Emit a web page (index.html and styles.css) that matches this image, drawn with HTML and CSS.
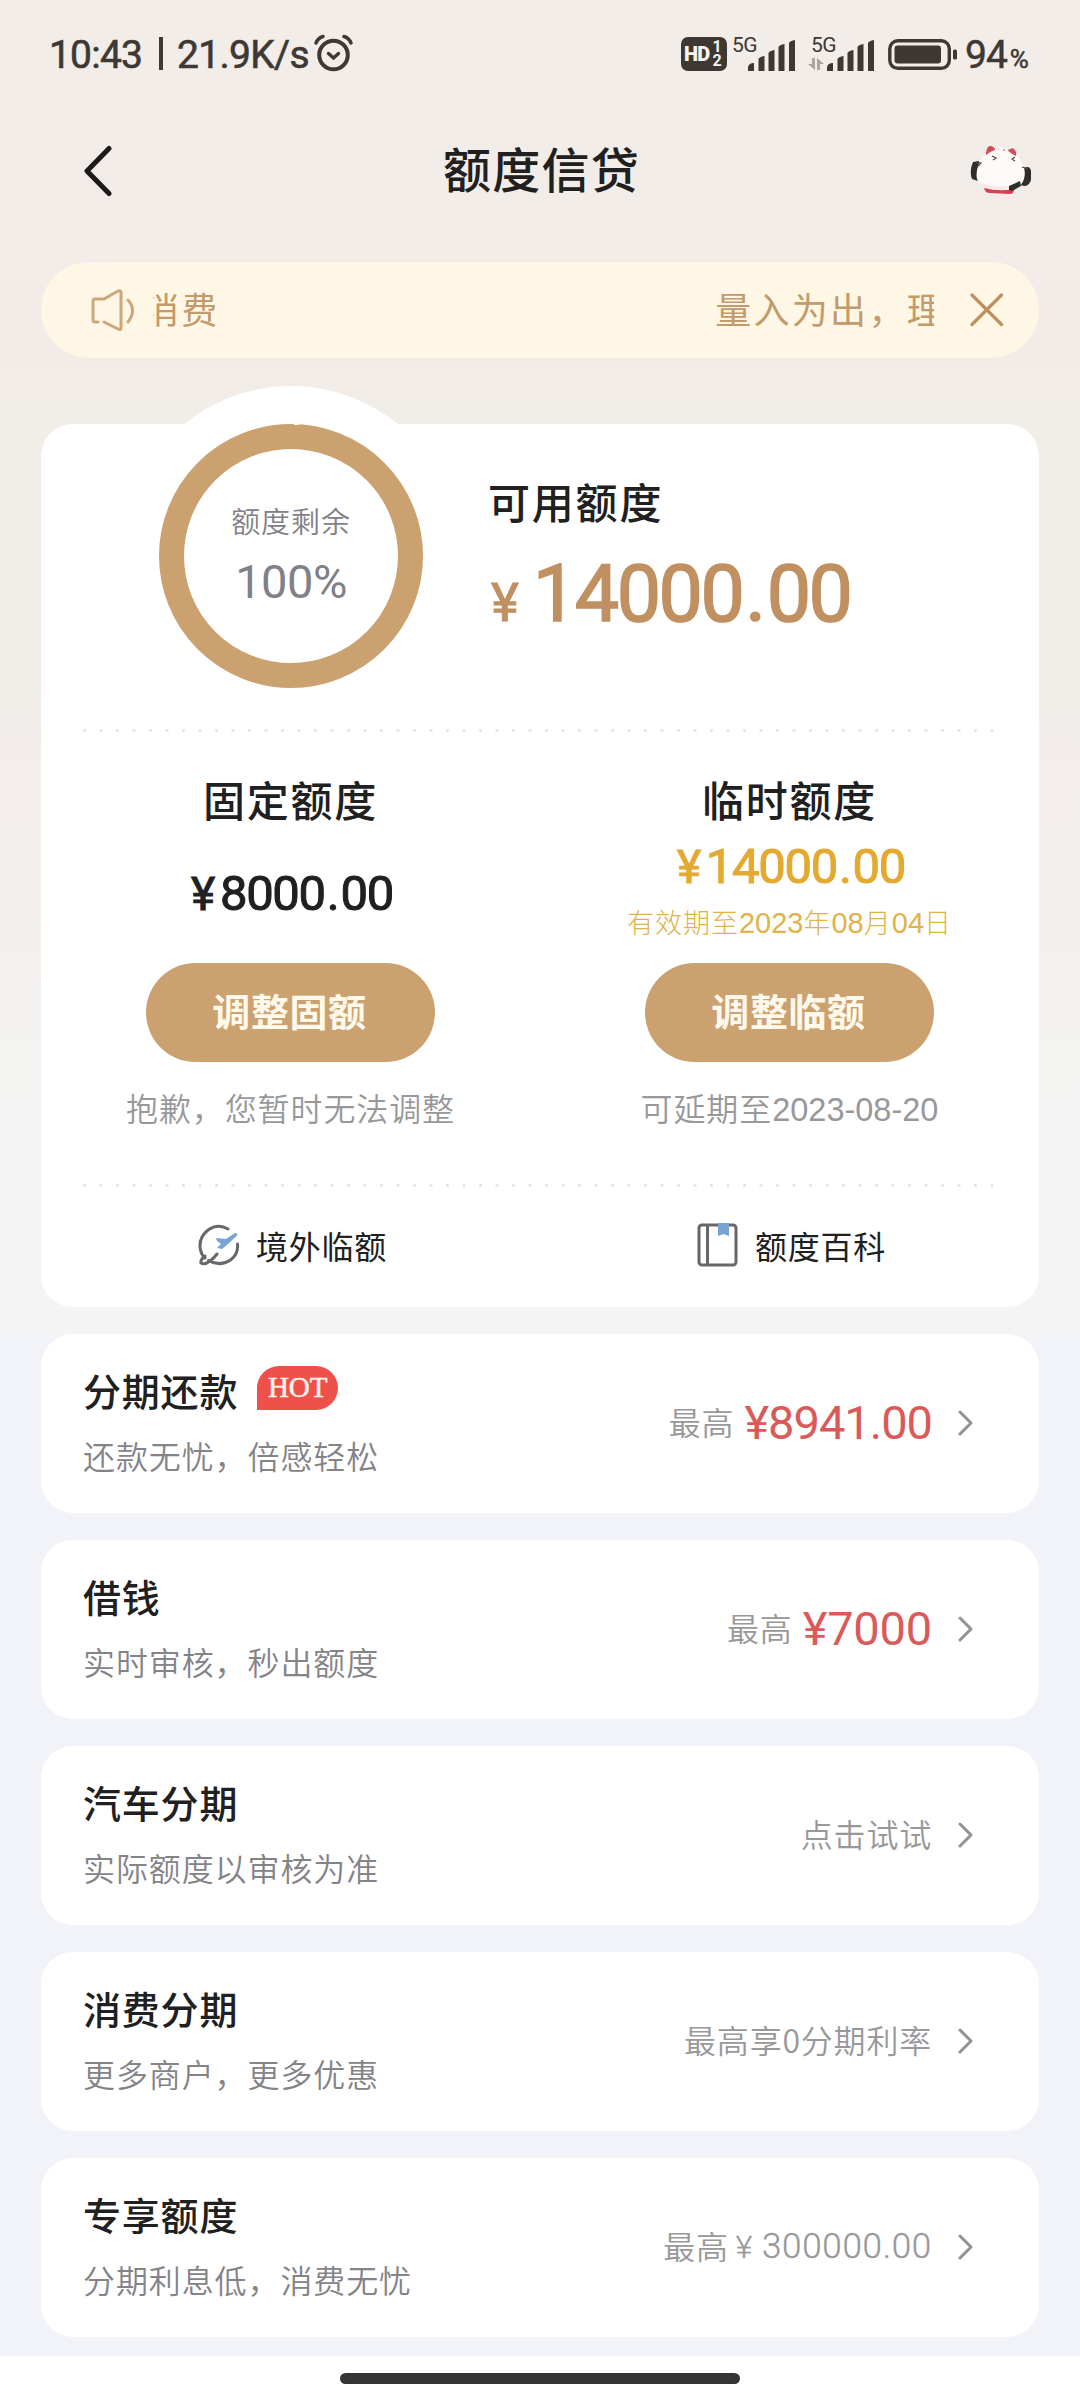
FILE: index.html
```html
<!DOCTYPE html>
<html lang="zh-CN">
<head>
<meta charset="utf-8">
<title>额度信贷</title>
<link rel="stylesheet" href="styles.css">
</head>
<body>
<svg class="defs" width="0" height="0" aria-hidden="true">
  <symbol id="chevron" viewBox="0 0 16 26"><path d="M2 2l11 11L2 24" fill="none" stroke="#929296" stroke-width="3" stroke-linecap="round" stroke-linejoin="round"/></symbol>
  <symbol id="signal" viewBox="0 0 48 32"><path d="M0 31v-4q1-4 6-4v8zM10.500 31V19q1-2 6-3v15zM20.500 31V13q1-2 6-3v21zM30.500 31V7q1-2 6-3v27zM41 31V3q1-2 6-3v31z" fill="#3d3834"/></symbol>
</svg>
<div class="screen">
  <header class="status">
    <span class="clock">10:43</span><span class="bar"></span><span class="speed">21.9K/s</span>
    <svg class="alarm" width="40" height="38" viewBox="0 0 40 38" fill="none" stroke="#3d3834" stroke-linecap="round"><circle cx="19.5" cy="21" r="14.3" stroke-width="4"/><path d="M14.5 19.5l5 4.5 5-4.5" stroke-width="3.4"/><path d="M2 9Q4 4 9 2.500M37 9Q35 4 30 2.500" stroke-width="3.4"/></svg>
    <div class="status-right">
      <span class="hd"><b>HD</b><i><em>1</em><em>2</em></i></span>
      <span class="net"><small>5G</small><svg width="48" height="32"><use href="#signal"/></svg></span>
      <span class="net net-b"><small>5G</small><svg class="updown" width="16" height="12" viewBox="0 0 16 12" fill="#aaa5a0"><path d="M4 0h3v12L0 6h4zM9 12V0l7 6h-4v6z"/></svg><svg width="48" height="32"><use href="#signal"/></svg></span>
      <svg class="battery" width="70" height="32" viewBox="0 0 70 32"><rect x="1.800" y="1.800" width="59.500" height="27.500" rx="8" fill="none" stroke="#3d3834" stroke-width="3.400"/><rect x="6.500" y="6.500" width="46.500" height="18" rx="3" fill="#3d3834"/><rect x="65" y="10.500" width="4" height="10" rx="1.500" fill="#3d3834"/></svg>
      <span class="level">94<small>%</small></span>
    </div>
  </header>

  <nav class="nav">
    <svg class="back" width="30" height="52" viewBox="0 0 30 52"><path d="M26 3.500L4 26l22 22.500" fill="none" stroke="#1d1a19" stroke-width="5" stroke-linecap="round" stroke-linejoin="round"/></svg>
    <h1>额度信贷</h1>
    <svg class="mascot" width="62" height="50" viewBox="0 0 62 50">
      <path d="M3 17l6-1-1 20-6-2q-3-8 1-17z" fill="#302d2d"/>
      <path d="M54 23q6-3 7 3v9q-2 6-7 6l-4-1z" fill="#302d2d"/>
      <path d="M29 2q14 1 20 11 8 10 5 21-4 13-25 12Q11 46 7 34q-2-10 5-21Q17 2 29 2z" fill="#fffafa"/>
      <path d="M9 36q3 8 12 9h18q10-2 14-10-8 7-22 6-14 1-22-5z" fill="#f8e9e6"/>
      <path d="M16 8q1-8 5-7 4 1 4 4-4 1-9 5zM38 6q3-4 6-2 3 3 2 7-4-2-8-5z" fill="#d64b5b"/>
      <path d="M14 43q15 4 30 1 0 5-4 5l-20-1q-5 0-6-5z" fill="#d83f52"/>
      <path d="M39 41l11-5 1 5-9 5-3-1z" fill="#302d2d"/>
      <path d="M22 11l4 2-3 2M45 12l-3 2 3 2M6 17l5 1-4 4M52 22l6 2" fill="none" stroke="#4b4544" stroke-width="1.200"/>
      <path d="M28 4h1M33 5h2M38 5h1" stroke="#dc8a93" stroke-width="1.500"/>
    </svg>
  </nav>

  <section class="notice">
    <svg width="46" height="44" viewBox="0 0 46 44" fill="none" stroke="#cda779" stroke-width="3" stroke-linecap="round" stroke-linejoin="round"><path d="M8 34H5q-2 0-2-2V13q0-2 2-2h9L28 3q3-1 3 1.500v35q0 3-3 1.500L14 34"/><path d="M38 12q9 10 0 22"/></svg>
    <div class="ticker"><span class="ticker-tail">消费</span><span class="ticker-head">量入为出，理</span></div>
    <svg class="close" width="34" height="34" viewBox="0 0 34 34"><path d="M2 2l29.500 29.500M31.500 2L2 31.500" stroke="#bd915f" stroke-width="3.200" stroke-linecap="round"/></svg>
  </section>

  <main>
    <section class="quota">
      <div class="overview">
        <div class="ring"><span class="ring-label">额度剩余</span><span class="ring-value">100%</span></div>
        <div class="available">
          <h2>可用额度</h2>
          <p class="total"><span class="yen">¥</span>14000<span class="dot">.</span>00</p>
        </div>
      </div>
      <div class="dots"></div>
      <div class="limits">
        <div class="limit">
          <h2>固定额度</h2>
          <div class="figures"><p class="sum"><span class="yen">¥</span>8000<span class="dot">.</span>00</p></div>
          <button>调整固额</button>
          <p class="note">抱歉，您暂时无法调整</p>
        </div>
        <div class="limit temp">
          <h2>临时额度</h2>
          <div class="figures"><p class="sum"><span class="yen">¥</span>14000<span class="dot">.</span>00</p><p class="valid">有效期至<span>2023</span>年<span>08</span>月<span>04</span>日</p></div>
          <button>调整临额</button>
          <p class="note">可延期至<span>2023-08-20</span></p>
        </div>
      </div>
      <div class="dots"></div>
      <div class="links">
        <a><svg width="42" height="42" viewBox="0 0 42 42"><path d="M30 5Q20-1 10 6 0 14 2.500 26q1 5 4.500 8M39.500 20q1 10-7 16-11 7-22 .5M7 32q-5 4-4 7 4 2 9-2 4-3 7-7" fill="none" stroke="#68686a" stroke-width="3" stroke-linecap="round"/><path d="M18 14l10 1 9-6q3 0 2 2.500L30 20l-6 5-5-1 4-4-4-3z" fill="#77a5d3"/></svg>境外临额</a>
        <a><svg width="42" height="44" viewBox="0 0 42 44"><rect x="2" y="2" width="37" height="40" rx="3" fill="none" stroke="#6a6665" stroke-width="3"/><path d="M10.500 2v40" stroke="#6a6665" stroke-width="3"/><path d="M21 0h11v13l-5.500-2L21 13z" fill="#7ba3d2"/></svg>额度百科</a>
      </div>
    </section>

    <section class="item">
      <div class="item-text"><h3>分期还款<span class="hot">HOT</span></h3><p>还款无忧，倍感轻松</p></div>
      <div class="item-value"><span>最高</span><strong>¥8941.00</strong></div>
      <svg width="16" height="26"><use href="#chevron"/></svg>
    </section>
    <section class="item">
      <div class="item-text"><h3>借钱</h3><p>实时审核，秒出额度</p></div>
      <div class="item-value"><span>最高</span><strong class="wide">¥7000</strong></div>
      <svg width="16" height="26"><use href="#chevron"/></svg>
    </section>
    <section class="item">
      <div class="item-text"><h3>汽车分期</h3><p>实际额度以审核为准</p></div>
      <div class="item-value"><span>点击试试</span></div>
      <svg width="16" height="26"><use href="#chevron"/></svg>
    </section>
    <section class="item">
      <div class="item-text"><h3>消费分期</h3><p>更多商户，更多优惠</p></div>
      <div class="item-value"><span>最高享0分期利率</span></div>
      <svg width="16" height="26"><use href="#chevron"/></svg>
    </section>
    <section class="item">
      <div class="item-text"><h3>专享额度</h3><p>分期利息低，消费无忧</p></div>
      <div class="item-value"><span>最高</span><span class="cap"><i>¥</i>300000.00</span></div>
      <svg width="16" height="26"><use href="#chevron"/></svg>
    </section>
  </main>
  <footer class="home"><span></span></footer>
</div>
</body>
</html>
```
FILE: styles.css
```css
* { box-sizing: border-box; margin: 0; padding: 0; }
body { width: 1080px; font-family: "Noto Sans CJK SC", sans-serif; color: #202020; }
svg { display: block; flex: none; }
i, em { font-style: normal; }
.defs { position: absolute; }
.screen {
  width: 1080px; height: 2400px; overflow: hidden;
  display: flex; flex-direction: column;
  background: linear-gradient(#f2ede8 0, #f2ece8 350px, #f1ede7 440px, #f1ede8 680px, #f3eeec 760px, #f3efed 930px, #f3f3f2 1060px, #f4f4f4 1334px, #f2f3f8 1336px);
}

/* status bar */
.status { height: 112px; padding: 0 51px 0 49px; display: flex; align-items: flex-start; font-family: Roboto, sans-serif; color: #3d3834; white-space: nowrap; }
.clock, .speed { font-size: 39px; line-height: 46px; margin-top: 32px; font-weight: 400; -webkit-text-stroke: .6px; }
.clock { width: 95px; letter-spacing: -.8px; }
.bar { width: 4px; height: 33px; background: #3d3834; margin: 37px 14px 0 15px; }
.speed { width: 137px; letter-spacing: -.7px; }
.alarm { margin-top: 34px; }
.status-right { margin-left: auto; display: flex; align-items: flex-start; }
.hd { width: 46px; height: 34px; margin-top: 37px; border-radius: 7px; background: #3d3834; color: #f7f3ee; display: flex; align-items: center; padding-left: 3px; font-size: 20px; }
.hd b { font-weight: 900; letter-spacing: -.8px; }
.hd i { display: flex; flex-direction: column; font-size: 16px; line-height: 14px; font-weight: 700; margin-left: 3px; }
.net { position: relative; width: 63px; margin-left: 5px; padding: 40px 0 0 16px; }
.net small { position: absolute; left: 0; top: 33px; font-size: 21px; line-height: 24px; letter-spacing: -.5px; }
.net-b { margin-left: 16px; }
.updown { position: absolute; left: -3px; top: 58px; }
.battery { margin: 39px 0 0 14px; }
.level { font-size: 39px; line-height: 46px; margin: 32px 0 0 7px; width: 64px; -webkit-text-stroke: .5px; letter-spacing: -1px; }
.level small { font-size: 26px; letter-spacing: 0; margin-left: 3px; }

/* title bar */
.nav { height: 150px; padding: 0 48px 0 83px; display: flex; align-items: flex-start; justify-content: space-between; }
.back { margin-top: 33px; }
.nav h1 { font-size: 48px; line-height: 60px; font-weight: 500; letter-spacing: 1.200px; margin: 25px 0 0; }
.mascot { margin-top: 33px; }

/* notice */
.notice { height: 96px; margin: 0 41px; padding: 0 35px 0 49px; border-radius: 48px; background: #fff7e6; display: flex; align-items: center; flex: none; }
.ticker { width: 781px; margin-left: 17px; overflow: hidden; display: flex; justify-content: space-between; font-size: 36px; line-height: 50px; letter-spacing: 2.300px; color: #c39a6b; white-space: nowrap; padding-bottom: 4px; }
.ticker-tail { margin-left: -10px; }
.ticker-head { margin-right: -11px; }
.close { margin-left: 36px; }

/* quota card */
main { padding: 66px 41px 0; display: flex; flex-direction: column; gap: 27px; }
.quota { position: relative; height: 883px; border-radius: 32px; background: #fff; }
.quota::before { content: ""; position: absolute; left: 80px; top: -38px; width: 340px; height: 340px; border-radius: 50%; background: #fff; }
.overview { position: relative; height: 305px; padding-left: 118px; display: flex; gap: 65px; }
.ring { position: relative; width: 264px; height: 264px; border: 25px solid #cca170; border-radius: 50%; display: flex; flex-direction: column; align-items: center; padding-top: 50px; gap: 16px; color: #808086; }
.ring::before { content: ""; position: absolute; left: 110px; top: -26px; width: 5px; height: 2px; background: #fff; }
.ring-label { font-size: 29px; line-height: 42px; letter-spacing: .9px; white-space: nowrap; font-weight: 350; }
.ring-value { font: 400 47px/50px Roboto, sans-serif; letter-spacing: -.5px; }
h2 { font-size: 42px; line-height: 50px; font-weight: 500; letter-spacing: 1.800px; }
.available { padding-top: 52px; }
.total { margin-top: 28px; font: 400 79px/80px Roboto, sans-serif; letter-spacing: -2.500px; color: #c09061; -webkit-text-stroke: 1.600px; }
.total .yen { font-size: 53px; letter-spacing: 0; margin: 0 14px 0 3px; -webkit-text-stroke: 1px; }
.total .dot { margin: 0 3px; }
.dots { position: relative; height: 3px; margin: 0 42px 0 42px; background: radial-gradient(circle at 1.500px 1.500px, #e5e5e9 1.200px, transparent 1.900px) 0 0 / 16.500px 3px repeat-x; }
.limits { height: 452px; display: grid; grid-template-columns: 1fr 1fr; padding-top: 42px; }
.limit { display: flex; flex-direction: column; align-items: center; }
.figures { height: 139px; display: flex; flex-direction: column; align-items: center; justify-content: center; white-space: nowrap; }
.sum { font: 400 49px/50px Roboto, sans-serif; letter-spacing: -1.300px; -webkit-text-stroke: 1px; padding-left: 3px; }
.sum .yen { margin-right: 6px; font-size: 46px; }
.sum .dot { margin: 0 2px; }
.temp .figures { color: #e4a930; justify-content: flex-start; padding-top: 18px; }
.valid { margin-top: 12px; font-size: 27px; line-height: 36px; letter-spacing: 1px; font-weight: 300; color: #e1b247; }
.valid span { font: 400 29px/30px "Liberation Sans", sans-serif; letter-spacing: 0; }
button { width: 289px; height: 99px; flex: none; border: 0; border-radius: 50px; background: #cca170; color: #fff9ec; font: 700 38px/50px "Noto Sans CJK SC", sans-serif; letter-spacing: .6px; padding: 0 2px 5px 0; }
.note { margin-top: 25px; font-size: 32px; line-height: 40px; letter-spacing: .9px; color: #98989a; white-space: nowrap; font-weight: 350; }
.note span { font: 400 32.500px/40px "Liberation Sans", sans-serif; letter-spacing: 0; }
.links { height: 119px; display: grid; grid-template-columns: 1fr 1fr; }
.links a { display: flex; align-items: center; justify-content: center; gap: 16px; font-size: 32px; line-height: 40px; letter-spacing: .8px; padding: 0 0 3px 4px; }

/* product rows */
.item { height: 179px; border-radius: 32px; background: #fff; padding: 0 65px 0 42px; display: flex; align-items: center; }
.item-text { flex: 1; align-self: flex-start; padding-top: 31px; }
.item h3 { display: flex; font-size: 38px; line-height: 50px; font-weight: 500; letter-spacing: .8px; }
.hot { width: 81px; height: 44px; margin: 1px 0 0 19px; border-radius: 22px 22px 22px 0; background: #ee5149; color: #fff0ea; font: 400 29px/42px "Liberation Serif", serif; letter-spacing: 0; text-align: center; -webkit-text-stroke: .6px; }
.item p { margin-top: 20px; font-size: 32px; line-height: 40px; letter-spacing: .9px; color: #838388; font-weight: 350; }
.item-value { display: flex; align-items: center; font-size: 32px; line-height: 40px; letter-spacing: .8px; color: #98989a; margin: -6px 26px 0 0; font-weight: 350; }
.item-value strong { font: 400 47px/50px Roboto, sans-serif; letter-spacing: -1px; color: #d95a58; margin: 4px 0 0 10px; }
.item-value .wide { letter-spacing: -.2px; }
.item > svg { margin-top: -1px; }
.cap { font-family: Roboto, sans-serif; font-size: 35px; letter-spacing: .7px; margin-top: 4px; font-weight: 300; -webkit-text-stroke: .3px; }
.cap i { font-size: 32px; margin: 0 9px 0 7px; }

/* gesture area */
.home { margin-top: auto; height: 44px; flex: none; background: #fff; display: flex; justify-content: center; padding-top: 17px; }
.home span { width: 400px; height: 11px; border-radius: 6px; background: #343434; }
```
